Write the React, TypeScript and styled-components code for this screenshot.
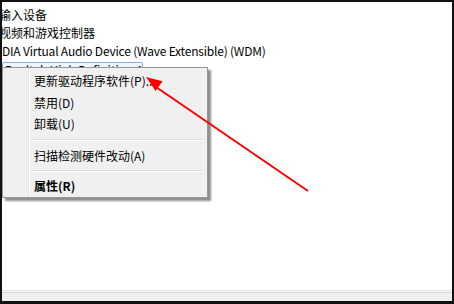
import React from "react";
import styled, { createGlobalStyle } from "styled-components";

const GlobalStyle = createGlobalStyle`
  html, body { margin: 0; padding: 0; background: #111; }
  #root { width: 454px; height: 304px; }
`;

const Frame = styled.div`
  position: relative;
  box-sizing: border-box;
  width: 454px;
  height: 304px;
  border: 2px solid #111;
  border-bottom-width: 3px;
  background: #fff;
  display: flex;
  flex-direction: column;
  overflow: hidden;
  font-family: "Noto Sans CJK SC", "Noto Sans", sans-serif;
`;

const Content = styled.div`
  flex: 1;
  padding-top: 4px;
  overflow: hidden;
`;

const TreeRow = styled.div<{ $indent: number; $tight?: boolean }>`
  height: 18px;
  line-height: 18px;
  font-size: 12px;
  color: #000;
  white-space: nowrap;
  letter-spacing: ${(p) => (p.$tight ? "-0.2px" : "0")};
  margin-left: ${(p) => p.$indent}px;
`;

const SelectedRow = styled.div`
  box-sizing: border-box;
  margin-top: 2px;
  width: 141px;
  height: 16px;
  line-height: 14px;
  font-size: 12px;
  padding-left: 2px;
  border: 1px solid #84acdd;
  border-radius: 2px;
  background: linear-gradient(#f2f8fe, #dcebfc);
  white-space: nowrap;
  overflow: hidden;
`;

const StatusBar = styled.div`
  height: 8px;
  border-top: 1px solid #e0e0e0;
  box-shadow: inset 0 1px 0 #fafafa, inset 0 2px 0 #d6d6d6;
  background: #efefef;
  padding-top: 2px;
`;

const Menu = styled.div`
  position: absolute;
  left: 0;
  top: 65px;
  width: 206px;
  box-sizing: border-box;
  padding: 2px 2px 1px 2px;
  background: #f0f0f0;
  border: 1px solid #979797;
  box-shadow: 3px 3px 2px rgba(0, 0, 0, 0.45);
  background-image: linear-gradient(
    to right,
    transparent 25px,
    #e2e3e3 25px,
    #e2e3e3 26px,
    #ffffff 26px,
    #ffffff 27px,
    transparent 27px
  );
`;

const MenuItem = styled.div<{ $h: number; $bold?: boolean }>`
  height: ${(p) => p.$h}px;
  line-height: ${(p) => p.$h}px;
  padding-left: 29px;
  font-size: 12px;
  font-weight: ${(p) => (p.$bold ? 700 : 400)};
  color: #000;
  white-space: nowrap;
`;

const Separator = styled.div<{ $h: number }>`
  height: ${(p) => p.$h}px;
  display: flex;
  align-items: center;
  padding-left: 27px;
  &::after {
    content: "";
    flex: 1;
    height: 1px;
    background: #e0e0e0;
    border-bottom: 1px solid #ffffff;
  }
`;

const Overlay = styled.svg`
  position: absolute;
  left: -2px;
  top: -2px;
  width: 454px;
  height: 304px;
  pointer-events: none;
`;

export default function App() {
  return (
    <>
      <GlobalStyle />
      <Frame>
        <Content>
          <TreeRow $indent={-3}>输入设备</TreeRow>
          <TreeRow $indent={-3}>视频和游戏控制器</TreeRow>
          <TreeRow $indent={0} $tight>
            DIA Virtual Audio Device (Wave Extensible) (WDM)
          </TreeRow>
          <SelectedRow>Realtek High Definition Audio</SelectedRow>
        </Content>
        <StatusBar />
        <Menu>
          <MenuItem $h={21.5}>更新驱动程序软件(P)...</MenuItem>
          <MenuItem $h={21.5}>禁用(D)</MenuItem>
          <MenuItem $h={21.5}>卸载(U)</MenuItem>
          <Separator $h={11} />
          <MenuItem $h={20}>扫描检测硬件改动(A)</MenuItem>
          <Separator $h={10} />
          <MenuItem $h={20} $bold>
            属性(R)
          </MenuItem>
        </Menu>
        <Overlay viewBox="0 0 454 304">
          <line x1="308" y1="191" x2="156" y2="87" stroke="#ff0000" strokeWidth="2" />
          <polygon points="146,77 155.6,91.1 162.5,81.3" fill="#ff0000" />
        </Overlay>
      </Frame>
    </>
  );
}
